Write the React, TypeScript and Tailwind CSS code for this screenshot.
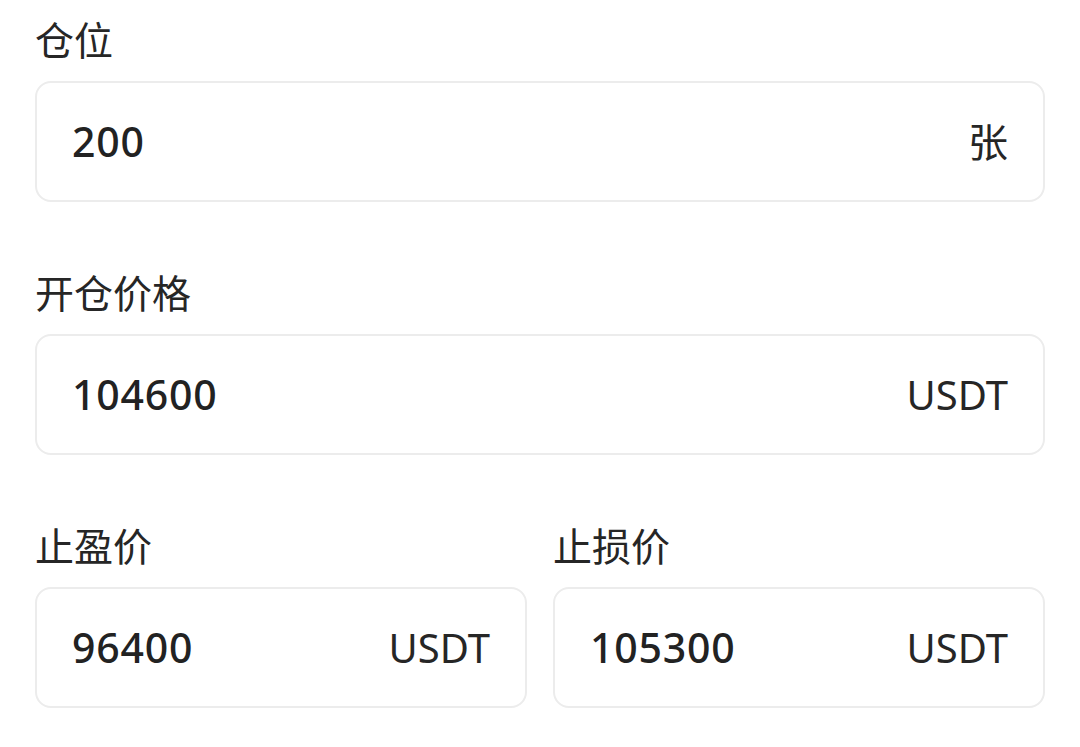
import React from "react";

interface FieldProps {
  label?: string;
  value: string;
  unit: string;
}

const font = { fontFamily: '"Noto Sans", "Noto Sans CJK SC", sans-serif' };

const Field: React.FC<FieldProps> = ({ label, value, unit }) => (
  <div className="flex flex-col flex-1 min-w-0">
    {label && (
      <div className="text-[39px] leading-[44px] text-[#262626] mb-[19px]">{label}</div>
    )}
    <div className="h-[121px] flex items-center justify-between border-2 border-[#ececec] rounded-[16px] pl-[35px] pr-[35px] bg-white">
      <span className="text-[41px] font-medium text-[#222222] tracking-[0.8px]">{value}</span>
      <span className="text-[40px] text-[#262626]">{unit}</span>
    </div>
  </div>
);

export default function App() {
  return (
    <div className="w-[1080px] h-[747px] bg-white pl-[35px] pr-[35px] pt-[18px]" style={font}>
      <div className="flex flex-col gap-[69px]">
        <Field label="仓位" value="200" unit="张" />
        <Field label="开仓价格" value="104600" unit="USDT" />
        <div className="flex gap-[26px]">
          <Field label="止盈价" value="96400" unit="USDT" />
          <Field label="止损价" value="105300" unit="USDT" />
        </div>
      </div>
    </div>
  );
}
